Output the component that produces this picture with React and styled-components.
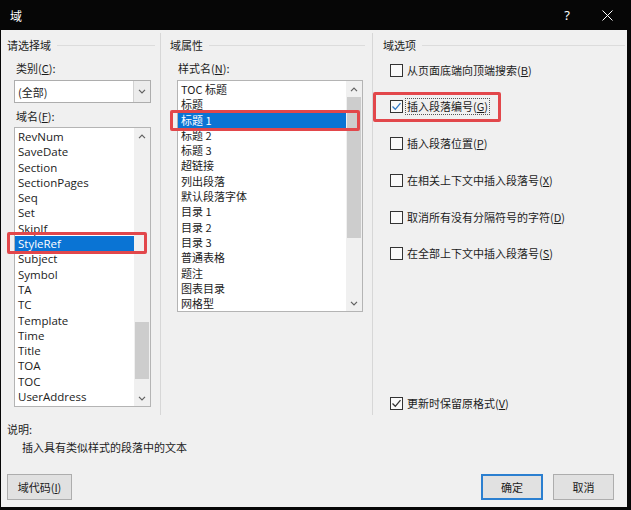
import React from "react";
import styled, { createGlobalStyle } from "styled-components";

const GlobalStyle = createGlobalStyle`
  html, body {
    margin: 0;
    padding: 0;
    background: #000;
  }
  body {
    font-family: "Noto Sans CJK SC", "Noto Sans", sans-serif;
    font-size: 11px;
    color: #1c1c1c;
  }
`;

const Window = styled.div`
  width: 631px;
  height: 510px;
  box-sizing: border-box;
  background: #060606;
  padding: 0 4px 3px 1px;
  display: flex;
  flex-direction: column;
`;

const TitleBar = styled.div`
  height: 30px;
  flex: none;
  display: flex;
  align-items: center;
  color: #fff;
  font-size: 12px;
  padding-left: 9px;
`;

const TitleButton = styled.div`
  width: 40px;
  height: 30px;
  display: flex;
  align-items: center;
  justify-content: center;
  color: #fff;
  font-family: "Noto Sans", sans-serif;
  font-size: 13px;
  &:first-of-type {
    margin-left: auto;
  }
`;

const Body = styled.div`
  flex: 1;
  background: #f0f0f0;
  display: flex;
  flex-direction: column;
`;

const Columns = styled.div`
  display: grid;
  grid-template-columns: 159px 212px 1fr;
  margin-top: 3px;
  height: 382px;
`;

const Column = styled.div`
  display: flex;
  flex-direction: column;
  padding: 3px 0 0 ${(p) => p.$pad}px;
  border-left: ${(p) => (p.$divider ? "1px solid #d7d7d7" : "none")};
`;

const GroupHeader = styled.div`
  height: 18px;
  display: flex;
  align-items: center;
  gap: 6px;
  margin-right: ${(p) => p.$gapRight || 5}px;
  &::after {
    content: "";
    flex: 1;
    height: 1px;
    background: #dcdcdc;
  }
`;

const Label = styled.div`
  height: 16px;
  line-height: 16px;
  margin: ${(p) => p.$top}px 0 0 ${(p) => p.$left}px;
  u {
    text-decoration: underline;
    text-underline-offset: 1px;
  }
`;

const ComboBox = styled.div`
  margin: 4px 0 0 7px;
  width: 137px;
  height: 23px;
  box-sizing: border-box;
  border: 1px solid #adadad;
  background: #fff;
  display: flex;
  align-items: center;
  padding-left: 3px;
`;

const ComboValue = styled.span`
  flex: 1;
`;

const ComboButton = styled.div`
  width: 16px;
  height: 100%;
  border-left: 1px solid #d2d2d2;
  background: #ececec;
  display: flex;
  align-items: center;
  justify-content: center;
`;

const ListBox = styled.div`
  margin: ${(p) => p.$top}px 0 0 7px;
  width: ${(p) => p.$width}px;
  height: ${(p) => p.$height}px;
  box-sizing: border-box;
  border: 1px solid #b4b4b4;
  background: #fff;
  display: flex;
`;

const Items = styled.div`
  flex: 1;
  min-width: 0;
  padding-top: 1px;
`;

const Item = styled.div`
  position: relative;
  height: 15.3px;
  line-height: 15.3px;
  padding-left: ${(p) => p.$indent}px;
  white-space: nowrap;
  font-family: ${(p) =>
    p.$latin ? '"Open Sans", "Noto Sans", sans-serif' : '"Noto Sans CJK SC", "Noto Sans", sans-serif'};
  font-size: ${(p) => (p.$latin ? "11.5px" : "11px")};
  background: ${(p) => (p.$selected ? "#0a74d4" : "transparent")};
  color: ${(p) => (p.$selected ? "#fff" : "#1c1c1c")};
`;

const Marker = styled.div`
  position: absolute;
  z-index: 3;
  left: ${(p) => p.$left}px;
  top: ${(p) => p.$top}px;
  bottom: ${(p) => p.$bottom}px;
  ${(p) => (p.$width ? `width: ${p.$width}px;` : `right: ${p.$right}px;`)}
  box-sizing: border-box;
  border: 3px solid #e2474b;
  border-radius: 2px;
  pointer-events: none;
`;

const Scrollbar = styled.div`
  width: 16px;
  flex: none;
  background: #f0f0f0;
  display: flex;
  flex-direction: column;
`;

const ScrollArrow = styled.div`
  height: 16px;
  flex: none;
  display: flex;
  align-items: center;
  justify-content: center;
`;

const Track = styled.div`
  flex: 1;
  position: relative;
`;

const Thumb = styled.div`
  position: absolute;
  left: 1px;
  right: 1px;
  top: ${(p) => p.$top}px;
  height: ${(p) => p.$height}px;
  background: #cdcdcd;
`;

const OptionRow = styled.div`
  position: relative;
  display: flex;
  align-items: center;
  gap: 3px;
  height: 18px;
  margin: ${(p) => (p.$bottom ? "auto 0 3px 7px" : `${p.$top}px 0 0 7px`)};
  u {
    text-underline-offset: 1px;
  }
`;

const Box = styled.div`
  width: 13px;
  height: 13px;
  box-sizing: border-box;
  border: 1px solid #333;
  background: #fafafa;
  display: flex;
  align-items: center;
  justify-content: center;
`;

const OptionText = styled.span`
  padding: 0 1px;
  outline: ${(p) => (p.$focused ? "1px dotted #555" : "none")};
  line-height: 15px;
`;

const Note = styled.div`
  padding: 6px 0 0 6px;
  line-height: 16px;
`;

const NoteText = styled.div`
  padding: 2px 0 0 21px;
  line-height: 16px;
`;

const ButtonRow = styled.div`
  display: flex;
  gap: 10px;
  margin-top: 19px;
  padding: 0 13px 0 6px;
`;

const Button = styled.div`
  width: ${(p) => p.$width}px;
  height: 26px;
  box-sizing: border-box;
  border: ${(p) => (p.$primary ? "2px solid #2b7fd0" : "1px solid #adadad")};
  background: #e1e1e1;
  display: flex;
  align-items: center;
  justify-content: center;
  &:nth-child(2) {
    margin-left: auto;
  }
  u {
    text-underline-offset: 1px;
  }
`;

const Chevron = ({ up }) => (
  <svg width="8" height="5" viewBox="0 0 8 5">
    <polyline
      points={up ? "1,4.2 4,1.2 7,4.2" : "1,0.8 4,3.8 7,0.8"}
      fill="none"
      stroke="#606060"
      strokeWidth="1.2"
    />
  </svg>
);

const Check = ({ color }) => (
  <svg width="11" height="11" viewBox="0 0 11 11">
    <polyline points="1.5,5.5 4.3,8.3 9.5,2.2" fill="none" stroke={color} strokeWidth="1.3" />
  </svg>
);

const fieldNames = [
  "RevNum", "SaveDate", "Section", "SectionPages", "Seq", "Set", "SkipIf", "StyleRef",
  "Subject", "Symbol", "TA", "TC", "Template", "Time", "Title", "TOA", "TOC", "UserAddress",
];

const styleNames = [
  "TOC 标题", "标题", "标题 1", "标题 2", "标题 3", "超链接", "列出段落", "默认段落字体",
  "目录 1", "目录 2", "目录 3", "普通表格", "题注", "图表目录", "网格型",
];

const options = [
  { text: "从页面底端向顶端搜索", key: "B" },
  { text: "插入段落编号", key: "G", checked: true, focused: true },
  { text: "插入段落位置", key: "P" },
  { text: "在相关上下文中插入段落号", key: "X" },
  { text: "取消所有没有分隔符号的字符", key: "D" },
  { text: "在全部上下文中插入段落号", key: "S" },
];

const ScrollBar = ({ top, height }) => (
  <Scrollbar>
    <ScrollArrow>
      <Chevron up />
    </ScrollArrow>
    <Track>
      <Thumb $top={top} $height={height} />
    </Track>
    <ScrollArrow>
      <Chevron />
    </ScrollArrow>
  </Scrollbar>
);

export default function App() {
  return (
    <>
      <GlobalStyle />
      <Window>
        <TitleBar>
          域
          <TitleButton>?</TitleButton>
          <TitleButton>
            <svg width="11" height="11" viewBox="0 0 11 11">
              <path d="M0.5 0.5 L10.5 10.5 M10.5 0.5 L0.5 10.5" stroke="#fff" strokeWidth="1" />
            </svg>
          </TitleButton>
        </TitleBar>
        <Body>
          <Columns>
            <Column $pad={6}>
              <GroupHeader>请选择域</GroupHeader>
              <Label $top={6} $left={9}>
                类别(<u>C</u>):
              </Label>
              <ComboBox>
                <ComboValue>(全部)</ComboValue>
                <ComboButton>
                  <Chevron />
                </ComboButton>
              </ComboBox>
              <Label $top={5} $left={9}>
                域名(<u>F</u>):
              </Label>
              <ListBox $top={3} $width={137} $height={280}>
                <Items>
                  {fieldNames.map((name) => (
                    <Item key={name} $latin $indent={3} $selected={name === "StyleRef"}>
                      {name}
                      {name === "StyleRef" && <Marker $left={-8} $right={-13} $top={-4} $bottom={-3} />}
                    </Item>
                  ))}
                </Items>
                <ScrollBar top={178} height={57} />
              </ListBox>
            </Column>

            <Column $pad={9} $divider>
              <GroupHeader $gapRight={7}>域属性</GroupHeader>
              <Label $top={6} $left={8}>
                样式名(<u>N</u>):
              </Label>
              <ListBox $top={4} $width={186} $height={232}>
                <Items>
                  {styleNames.map((name) => (
                    <Item key={name} $indent={3} $selected={name === "标题 1"}>
                      {name}
                      {name === "标题 1" && <Marker $left={-8} $right={-14} $top={-3} $bottom={-3} />}
                    </Item>
                  ))}
                </Items>
                <ScrollBar top={0} height={141} />
              </ListBox>
            </Column>

            <Column $pad={10} $divider>
              <GroupHeader $gapRight={2}>域选项</GroupHeader>
              {options.map((o, i) => (
                <OptionRow key={o.key} $top={i === 0 ? 7 : 18.8}>
                  <Box>{o.checked && <Check color="#2f78c4" />}</Box>
                  <OptionText $focused={o.focused}>
                    {o.text}(<u>{o.key}</u>)
                  </OptionText>
                  {o.focused && <Marker $left={-17} $width={128} $top={-6} $bottom={-6} />}
                </OptionRow>
              ))}
              <OptionRow $bottom>
                <Box>
                  <Check color="#333" />
                </Box>
                <OptionText>
                  更新时保留原格式(<u>V</u>)
                </OptionText>
              </OptionRow>
            </Column>
          </Columns>

          <Note>说明:</Note>
          <NoteText>插入具有类似样式的段落中的文本</NoteText>

          <ButtonRow>
            <Button $width={65}>
              域代码(<u>I</u>)
            </Button>
            <Button $width={62} $primary>
              确定
            </Button>
            <Button $width={61}>取消</Button>
          </ButtonRow>
        </Body>
      </Window>
    </>
  );
}
